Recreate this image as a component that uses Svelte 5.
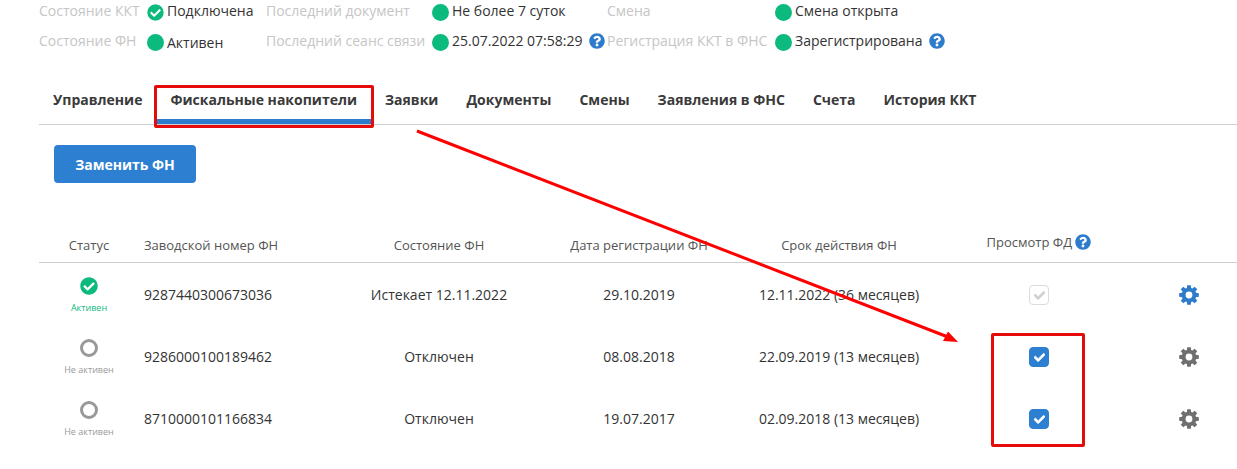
<script>
  const CHECK_CIRCLE = "M504 256c0 136.967-111.033 248-248 248S8 392.967 8 256 119.033 8 256 8s248 111.033 248 248zM227.314 387.314l184-184c6.248-6.248 6.248-16.379 0-22.627l-22.627-22.627c-6.248-6.249-16.379-6.249-22.628 0L216 308.118l-70.059-70.059c-6.248-6.248-16.379-6.248-22.628 0l-22.627 22.627c-6.248 6.248-6.248 16.379 0 22.627l104 104c6.249 6.249 16.379 6.249 22.628.001z";
  const QUESTION = "M504 256c0 136.997-111.043 248-248 248S8 392.997 8 256C8 119.083 119.043 8 256 8s248 111.083 248 248zM262.655 90c-54.497 0-89.255 22.957-116.549 63.758-3.536 5.286-2.353 12.415 2.715 16.258l34.699 26.31c5.205 3.947 12.621 3.008 16.665-2.122 17.864-22.658 30.113-35.797 57.303-35.797 20.429 0 45.698 13.148 45.698 32.958 0 14.976-12.363 22.667-32.534 33.976C247.128 238.528 216 254.941 216 296v4c0 6.627 5.373 12 12 12h56c6.627 0 12-5.373 12-12v-1.333c0-28.462 83.186-29.647 83.186-106.667 0-58.002-60.165-102-116.531-102zM256 338c-25.365 0-46 20.635-46 46 0 25.364 20.635 46 46 46s46-20.636 46-46c0-25.365-20.635-46-46-46z";
  const CHECK = "M173.898 439.404l-166.4-166.4c-9.997-9.997-9.997-26.206 0-36.204l36.203-36.204c9.997-9.998 26.207-9.998 36.204 0L192 312.69 432.095 72.596c9.997-9.997 26.207-9.997 36.204 0l36.203 36.204c9.997 9.997 9.997 26.206 0 36.204l-294.4 294.401c-9.998 9.997-26.207 9.997-36.204-.001z";

  // Eight-tooth cog, built around the centre of a 20x20 box.
  function polar(deg, r) {
    const a = (deg * Math.PI) / 180;
    return `${(10 + r * Math.cos(a)).toFixed(2)} ${(10 + r * Math.sin(a)).toFixed(2)}`;
  }
  function cogPath() {
    const pts = [];
    for (let k = 0; k < 8; k++) {
      const a = k * 45 - 90;
      pts.push(polar(a - 17, 7.3), polar(a - 10.5, 10), polar(a + 10.5, 10), polar(a + 17, 7.3));
    }
    return `M${pts.join("L")}ZM13.4 10a3.4 3.4 0 1 0-6.8 0a3.4 3.4 0 1 0 6.8 0Z`;
  }
  const COG = cogPath();

  const tabs = ["Управление", "Фискальные накопители", "Заявки", "Документы", "Смены", "Заявления в ФНС", "Счета", "История ККТ"];

  const rows = [
    { active: true, serial: "9287440300673036", state: "Истекает 12.11.2022", reg: "29.10.2019", term: "12.11.2022 (36 месяцев)" },
    { active: false, serial: "9286000100189462", state: "Отключен", reg: "08.08.2018", term: "22.09.2019 (13 месяцев)" },
    { active: false, serial: "8710000101166834", state: "Отключен", reg: "19.07.2017", term: "02.09.2018 (13 месяцев)" }
  ];
</script>

<div class="page">
  <div class="info">
    <span class="label">Состояние ККТ</span>
    <svg class="dot" viewBox="0 0 512 512" preserveAspectRatio="none"><path d={CHECK_CIRCLE} /></svg>
    <span class="value">Подключена</span>
    <span class="label">Последний документ</span>
    <span class="dot"></span>
    <span class="value">Не более 7 суток</span>
    <span class="label">Смена</span>
    <span class="dot"></span>
    <span class="value">Смена открыта</span>

    <span class="label">Состояние ФН</span>
    <span class="dot"></span>
    <span class="value low">Активен</span>
    <span class="label">Последний сеанс связи</span>
    <span class="dot"></span>
    <span class="value with-help">25.07.2022 07:58:29
      <svg class="help" viewBox="0 0 512 512"><path d={QUESTION} /></svg>
    </span>
    <span class="label">Регистрация ККТ в ФНС</span>
    <span class="dot"></span>
    <span class="value">Зарегистрирована
      <svg class="help gap" viewBox="0 0 512 512"><path d={QUESTION} /></svg>
    </span>
  </div>

  <nav class="tabs">
    {#each tabs as tab, i}
      <span class="tab" class:active={i === 1}>{tab}</span>
    {/each}
  </nav>

  <button class="primary">Заменить ФН</button>

  <div class="table">
    <div class="row head">
      <span>Статус</span>
      <span class="left">Заводской номер ФН</span>
      <span>Состояние ФН</span>
      <span>Дата регистрации ФН</span>
      <span>Срок действия ФН</span>
      <span class="view">Просмотр ФД
        <svg class="help" viewBox="0 0 512 512"><path d={QUESTION} /></svg>
      </span>
      <span></span>
    </div>
    {#each rows as row}
      <div class="row body">
        <div class="status" class:on={row.active}>
          {#if row.active}
            <svg class="status-icon" viewBox="0 0 512 512"><path d={CHECK_CIRCLE} /></svg>
            <small>Активен</small>
          {:else}
            <span class="ring"></span>
            <small>Не активен</small>
          {/if}
        </div>
        <span class="cell left">{row.serial}</span>
        <span class="cell">{row.state}</span>
        <span class="cell">{row.reg}</span>
        <span class="cell">{row.term}</span>
        <span class="box" class:checked={!row.active}>
          <svg viewBox="0 0 512 512"><path d={CHECK} /></svg>
        </span>
        <svg class="cog" class:blue={row.active} viewBox="0 0 20 20"><path fill-rule="evenodd" d={COG} /></svg>
      </div>
    {/each}
  </div>

  <div class="mark mark-tab"></div>
  <div class="mark mark-boxes"></div>
  <svg class="arrow" width="1237" height="469" viewBox="0 0 1237 469">
    <line x1="417" y1="131" x2="948" y2="337" />
    <polygon points="958,342 943,341 948,331.5" />
  </svg>
</div>

<style>
  :global(body) {
    margin: 0;
    background: #fff;
    overflow: hidden;
  }

  .page {
    position: relative;
    width: 1237px;
    height: 469px;
    padding-left: 39px;
    box-sizing: border-box;
    overflow: hidden;
    font-family: "Open Sans", sans-serif;
    font-size: 14px;
    color: #333;
  }

  .info {
    display: grid;
    grid-template-columns: 108px 20px 99px 166px 20px 155px 168px 20px 1fr;
    grid-auto-rows: 22px;
    row-gap: 8px;
    align-items: center;
    margin-top: -1px;
    white-space: nowrap;
  }

  .label {
    color: #c6c6c6;
  }

  .value.low {
    position: relative;
    top: 2px;
  }

  .dot {
    display: block;
    width: 17px;
    height: 17px;
    margin-top: 5px;
    border-radius: 50%;
    background: #0dba7e;
  }

  svg.dot {
    background: none;
    fill: #0dba7e;
  }

  .help {
    width: 16px;
    height: 16px;
    fill: #2d7bcb;
    vertical-align: -3px;
  }

  .help.gap {
    margin-left: 3px;
  }

  .with-help .help {
    margin-left: 3px;
  }

  .tabs {
    display: flex;
    margin-top: 29px;
    height: 44px;
    border-bottom: 1px solid #cfcfcf;
    width: 1198px;
    box-sizing: content-box;
  }

  .tab {
    padding: 0 14px;
    line-height: 40px;
    height: 44px;
    box-sizing: border-box;
    font-weight: 700;
    color: #3a3a3a;
    white-space: nowrap;
  }

  .tab.active {
    border-bottom: 5px solid #2d7bcb;
  }

  .primary {
    display: block;
    margin: 20px 0 0 15px;
    width: 142px;
    height: 38px;
    padding: 0;
    border: none;
    border-radius: 4px;
    background: #2d7fd1;
    color: #fff;
    font: 700 14px "Open Sans", sans-serif;
  }

  .table {
    margin-top: 44px;
    width: 1198px;
  }

  .row {
    display: grid;
    grid-template-columns: 100px 200px 200px 200px 200px 200px 100px;
    height: 62px;
    align-items: center;
    justify-items: center;
    white-space: nowrap;
  }

  .row.head {
    height: 35px;
    font-size: 13px;
    color: #555;
    border-bottom: 1px solid #cfcfcf;
    margin-bottom: 1px;
  }

  .cell {
    padding-bottom: 2px;
  }

  .left {
    justify-self: start;
    padding-left: 5px;
  }

  .view {
    position: relative;
    top: -3px;
  }

  .status {
    display: flex;
    flex-direction: column;
    align-items: center;
    gap: 7px;
    padding-top: 1px;
    color: #999;
  }

  .status.on {
    color: #0dba7e;
  }

  .status small {
    font-size: 9px;
    line-height: 12px;
  }

  .status-icon {
    width: 18px;
    height: 18px;
    fill: #0dba7e;
  }

  .ring {
    width: 18px;
    height: 18px;
    box-sizing: border-box;
    border: 3px solid #999;
    border-radius: 50%;
  }

  .box {
    display: flex;
    align-items: center;
    justify-content: center;
    width: 20px;
    height: 20px;
    box-sizing: border-box;
    border: 1.5px solid #dcdcdc;
    border-radius: 4px;
    background: #fff;
  }

  .box svg {
    width: 11px;
    height: 11px;
    fill: #cfcfcf;
    stroke: #cfcfcf;
    stroke-width: 30;
  }

  .box.checked {
    border-color: #2d7fd1;
    background: #2d7fd1;
  }

  .box.checked svg {
    fill: #fff;
    stroke: #fff;
  }

  .cog {
    width: 20px;
    height: 20px;
    fill: #6f6f6f;
  }

  .cog.blue {
    fill: #2d7bcb;
  }

  .mark {
    position: absolute;
    box-sizing: border-box;
    border: 3px solid #e50b0b;
    border-radius: 2px;
  }

  .mark-tab {
    left: 154px;
    top: 85px;
    width: 220px;
    height: 43px;
  }

  .mark-boxes {
    left: 991px;
    top: 333px;
    width: 94px;
    height: 114px;
  }

  .arrow {
    position: absolute;
    left: 0;
    top: 0;
    pointer-events: none;
  }

  .arrow line {
    stroke: #f00;
    stroke-width: 3;
  }

  .arrow polygon {
    fill: #f00;
  }
</style>
